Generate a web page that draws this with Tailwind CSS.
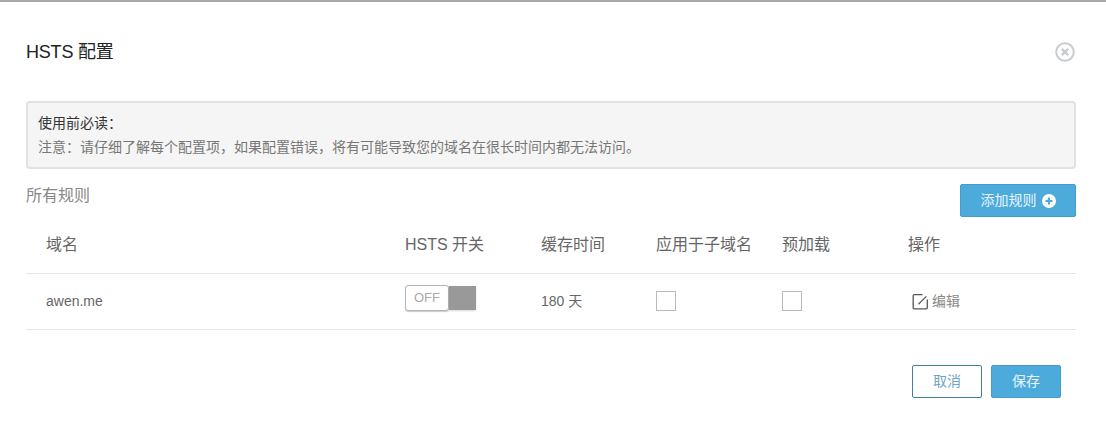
<!DOCTYPE html>
<html><head><meta charset="utf-8">
<script src="https://cdn.jsdelivr.net/npm/@tailwindcss/browser@4"></script>
</head>
<body class="bg-white overflow-hidden font-['Liberation_Sans','Noto_Sans_CJK_SC',sans-serif]">
<div class="w-[1106px] h-[437px] border-t-2 border-[#a9a9a9] flex flex-col pl-[26px] pr-[30px] text-[#666]">
  <header class="flex justify-between items-center h-[99px] shrink-0">
    <h2 class="text-[18px] tracking-[-0.2px] text-[#222] pt-[1px]">HSTS 配置</h2>
    <svg class="w-[20px] h-[20px] mr-[1px]" viewBox="0 0 20 20" fill="none" stroke="#c8ccd0" stroke-width="2"><circle cx="10" cy="10" r="8.8"/><path d="M6.8 6.8l6.4 6.4M13.2 6.8l-6.4 6.4" stroke-width="2.4"/></svg>
  </header>
  <div class="h-[68px] shrink-0 bg-[#f5f5f5] border-2 border-[#e2e2e2] rounded-[4px] px-[10px] pt-[8px] text-[14px] leading-[24px]">
    <p class="text-[#333]">使用前必读&#xFF1A;</p>
    <p class="text-[#777]">注意&#xFF1A;请仔细了解每个配置项&#xFF0C;如果配置错误&#xFF0C;将有可能导致您的域名在很长时间内都无法访问。</p>
  </div>
  <div class="flex justify-between items-start mt-[15px] h-[33px] shrink-0">
    <span class="text-[16px] leading-[24px] text-[#888]">所有规则</span>
    <button class="w-[116px] h-[33px] bg-[#4dabdc] border border-[#459cc9] rounded-[2px] text-[#e8f5fb] text-[14px] flex items-center justify-center gap-[5px]">添加规则<svg class="w-[14px] h-[14px]" viewBox="0 0 14 14"><circle cx="7" cy="7" r="7" fill="#fff"/><path d="M7 3.5v7M3.5 7h7" stroke="#4dabdc" stroke-width="2.2"/></svg></button>
  </div>
  <div class="grid grid-cols-[379px_136px_115px_126px_126px_1fr]">
    <div class="col-span-6 grid grid-cols-subgrid items-center h-[57px] border-b border-[#e6e6e6] pl-[20px] text-[16px] pb-[1px]">
      <span>域名</span><span>HSTS 开关</span><span>缓存时间</span><span>应用于子域名</span><span>预加载</span><span>操作</span>
    </div>
    <div class="col-span-6 grid grid-cols-subgrid items-center h-[56px] border-b border-[#e6e6e6] pl-[20px] text-[14px]">
      <span class="text-[#666]">awen.me</span>
      <div class="w-[71px] h-[26px] flex items-center -mt-[7px]">
        <span class="w-[44px] h-[26px] flex items-center justify-center border border-[#b5b5b5] rounded-[3px] bg-white text-[13px] text-[#aaa] shadow-[0_1px_1px_rgba(0,0,0,0.2)]">OFF</span><span class="flex-1 h-[24px] bg-[#999] shadow-[0_1px_2px_rgba(0,0,0,0.15)]"></span>
      </div>
      <span class="text-[#666]">180 天</span>
      <span class="w-[20px] h-[20px] border border-[#bbb] block -mt-[2px]"></span>
      <span class="w-[20px] h-[20px] border border-[#bbb] block -mt-[2px]"></span>
      <span class="flex items-center gap-[3px] pl-[4px] text-[#888]"><svg class="w-[17px] h-[17px]" viewBox="0 0 17 17" fill="none" stroke="#555" stroke-width="1.3"><path d="M10.5 1.6H2.2a1 1 0 0 0-1 1v12.2a1 1 0 0 0 1 1h12.1a1 1 0 0 0 1-1V6.5"/><path d="M14.4 3.4L8 9.6 6.6 11.2"/></svg>编辑</span>
    </div>
  </div>
  <div class="flex justify-end gap-[9px] mt-[35px] pr-[15px]">
    <button class="w-[70px] h-[33px] border border-[#3f7fa3] rounded-[2px] text-[#6ea6c6] text-[14px]">取消</button>
    <button class="w-[70px] h-[33px] bg-[#4dabdc] border border-[#459cc9] rounded-[2px] text-[#e8f5fb] text-[14px]">保存</button>
  </div>
</div>
</body></html>
